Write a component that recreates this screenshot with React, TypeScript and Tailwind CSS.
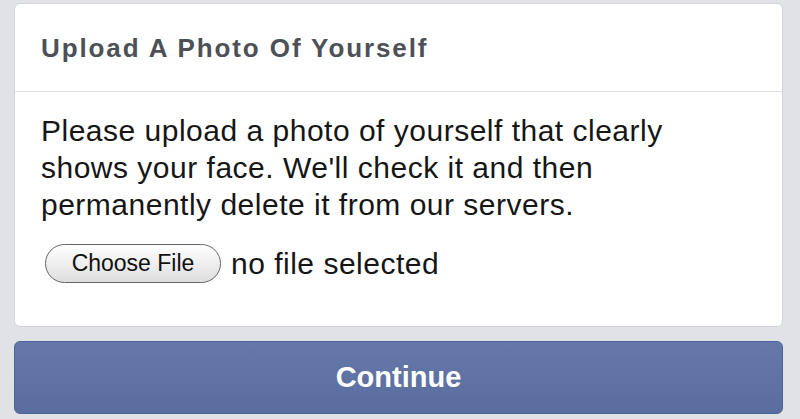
import React from "react";

export default function App() {
  return (
    <div
      className="w-[800px] h-[419px] overflow-hidden bg-[#e1e2e6] pl-[14px] pr-[17px] pt-[3px]"
      style={{ fontFamily: '"Liberation Sans", Arial, sans-serif' }}
    >
      <div className="bg-white rounded-[6px] border border-[#d3d5da] h-[324px] flex flex-col">
        <div className="h-[88px] flex items-center px-[26px] border-b border-[#dddfe2]">
          <h1 className="text-[26px] font-bold text-[#4d5157] leading-none tracking-[1.9px]">
            Upload A Photo Of Yourself
          </h1>
        </div>
        <div className="px-[26px] pt-[20px]">
          <p className="text-[30px] leading-[37px] tracking-[0.5px] text-[#161616]">
            Please upload a photo of yourself that clearly
            <br />
            shows your face. We'll check it and then
            <br />
            permanently delete it from our servers.
          </p>
          <div className="flex items-center mt-[21px] gap-[10px]">
            <button className="ml-[4px] h-[39px] w-[176px] rounded-full border border-[#666] bg-gradient-to-b from-white to-[#dedede] text-[23px] leading-none text-[#111]">
              Choose File
            </button>
            <span className="text-[30px] leading-none tracking-[0.5px] text-[#161616]">no file selected</span>
          </div>
        </div>
      </div>
      <button className="mt-[14px] w-full h-[73px] rounded-[6px] border border-[#4e6496] bg-gradient-to-b from-[#6479a9] to-[#596e9e] text-white text-[29px] font-bold">
        Continue
      </button>
    </div>
  );
}
